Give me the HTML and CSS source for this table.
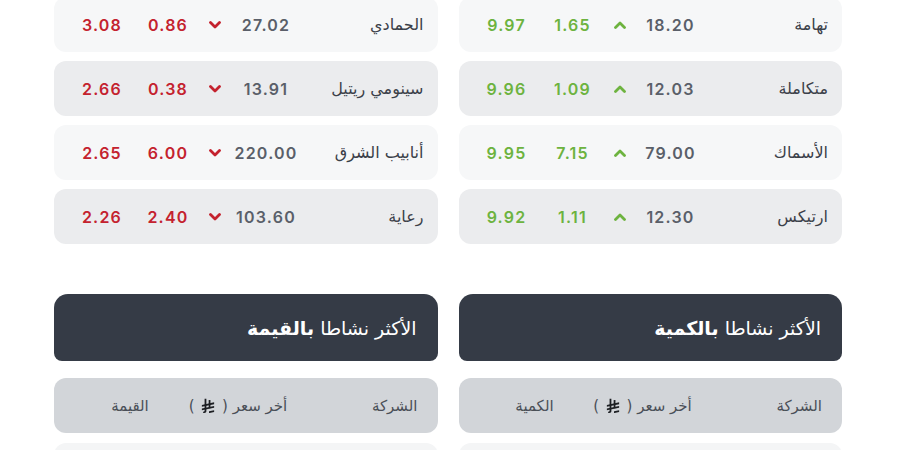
FILE: index.html
```html
<!DOCTYPE html>
<html lang="ar" dir="rtl">
  <head>
    <meta charset="UTF-8" />
    <meta name="viewport" content="width=device-width, initial-scale=1.0" />
    <title>السوق السعودي</title>
    <link rel="stylesheet" href="styles.css">
  </head>
  <body>
    <main class="board">
      <!-- right column: gainers + most active by volume -->
      <section class="col">
        <div class="rows">
          <div class="row">
            <span class="name">تهامة</span>
            <span class="num price">18.20</span>
            <span class="arrow up"><svg viewBox="0 0 12 8"><path d="M1.5 6.5 L6 2 L10.5 6.5" /></svg></span>
            <span class="num up-txt">1.65</span>
            <span class="num up-txt">9.97</span>
          </div>
          <div class="row">
            <span class="name">متكاملة</span>
            <span class="num price">12.03</span>
            <span class="arrow up"><svg viewBox="0 0 12 8"><path d="M1.5 6.5 L6 2 L10.5 6.5" /></svg></span>
            <span class="num up-txt">1.09</span>
            <span class="num up-txt">9.96</span>
          </div>
          <div class="row">
            <span class="name">الأسماك</span>
            <span class="num price">79.00</span>
            <span class="arrow up"><svg viewBox="0 0 12 8"><path d="M1.5 6.5 L6 2 L10.5 6.5" /></svg></span>
            <span class="num up-txt">7.15</span>
            <span class="num up-txt">9.95</span>
          </div>
          <div class="row">
            <span class="name">ارتيكس</span>
            <span class="num price">12.30</span>
            <span class="arrow up"><svg viewBox="0 0 12 8"><path d="M1.5 6.5 L6 2 L10.5 6.5" /></svg></span>
            <span class="num up-txt">1.11</span>
            <span class="num up-txt">9.92</span>
          </div>
        </div>

        <div class="panel-title">الأكثر نشاطا <b>بالكمية</b></div>
        <div class="head-row">
          <span>الشركة</span>
          <span>أخر سعر ( <svg class="riyal" viewBox="0 0 20 22"><path d="M5 1h2.6v18.5c0 1.5-1.2 2.5-3 2.5H2.5l1.3-2.4H5z" /><path d="M11 3h2.6v12H11z" /><path d="M1 10.2 19 6.4v2.6L1 12.8z" /><path d="M1 15.4 19 11.6v2.6L1 18z" /><path d="M11.5 19.6 19 18v2.6l-7.5 1.6z" /></svg> )</span>
          <span>الكمية</span>
        </div>
        <div class="row next"></div>
      </section>

      <!-- left column: losers + most active by value -->
      <section class="col">
        <div class="rows">
          <div class="row">
            <span class="name">الحمادي</span>
            <span class="num price">27.02</span>
            <span class="arrow down"><svg viewBox="0 0 12 8"><path d="M1.5 1.5 L6 6 L10.5 1.5" /></svg></span>
            <span class="num down-txt">0.86</span>
            <span class="num down-txt">3.08</span>
          </div>
          <div class="row">
            <span class="name">سينومي ريتيل</span>
            <span class="num price">13.91</span>
            <span class="arrow down"><svg viewBox="0 0 12 8"><path d="M1.5 1.5 L6 6 L10.5 1.5" /></svg></span>
            <span class="num down-txt">0.38</span>
            <span class="num down-txt">2.66</span>
          </div>
          <div class="row">
            <span class="name">أنابيب الشرق</span>
            <span class="num price">220.00</span>
            <span class="arrow down"><svg viewBox="0 0 12 8"><path d="M1.5 1.5 L6 6 L10.5 1.5" /></svg></span>
            <span class="num down-txt">6.00</span>
            <span class="num down-txt">2.65</span>
          </div>
          <div class="row">
            <span class="name">رعاية</span>
            <span class="num price">103.60</span>
            <span class="arrow down"><svg viewBox="0 0 12 8"><path d="M1.5 1.5 L6 6 L10.5 1.5" /></svg></span>
            <span class="num down-txt">2.40</span>
            <span class="num down-txt">2.26</span>
          </div>
        </div>

        <div class="panel-title">الأكثر نشاطا <b>بالقيمة</b></div>
        <div class="head-row">
          <span>الشركة</span>
          <span>أخر سعر ( <svg class="riyal" viewBox="0 0 20 22"><path d="M5 1h2.6v18.5c0 1.5-1.2 2.5-3 2.5H2.5l1.3-2.4H5z" /><path d="M11 3h2.6v12H11z" /><path d="M1 10.2 19 6.4v2.6L1 12.8z" /><path d="M1 15.4 19 11.6v2.6L1 18z" /><path d="M11.5 19.6 19 18v2.6l-7.5 1.6z" /></svg> )</span>
          <span>القيمة</span>
        </div>
        <div class="row next"></div>
      </section>
    </main>
  </body>
</html>
```

FILE: styles.css
```css
body {
  margin: 0;
  background-color: #fff;
  font-family: "DejaVu Sans", sans-serif;
  color: #3b4049;
  overflow: hidden;
}
.board {
  display: flex;
  gap: 21px;
  padding: 0 58px 0 54px;
  margin-top: -3px;
}
.col {
  width: 384px;
  display: flex;
  flex-direction: column;
}
.rows {
  display: flex;
  flex-direction: column;
  gap: 9px;
}
.row {
  height: 55px;
  border-radius: 12px;
  background-color: #f6f7f8;
  display: grid;
  grid-template-columns: 1fr 84px 18px 76px 56px;
  align-items: center;
  padding: 0 14px 0 20px;
}
.rows .row:nth-child(even) {
  background-color: #ebecee;
}
.name {
  font-size: 16px;
  color: #3b4049;
}
.num {
  font-family: Inter, sans-serif;
  font-weight: 600;
  font-size: 16px;
  letter-spacing: 1.2px;
  text-align: center;
}
.price {
  color: #5a5f69;
}
.up-txt {
  color: #6db33f;
}
.down-txt {
  color: #c4222e;
}
.arrow {
  display: flex;
  justify-content: center;
}
.arrow svg {
  width: 12px;
  height: 8px;
  fill: none;
  stroke-width: 2.8;
  stroke-linecap: round;
  stroke-linejoin: round;
}
.arrow.up svg {
  stroke: #6db33f;
}
.arrow.down svg {
  stroke: #c4222e;
}
.panel-title {
  margin-top: 50px;
  height: 67px;
  border-radius: 14px 14px 8px 8px;
  background-color: #353b46;
  color: #fff;
  font-size: 19px;
  display: flex;
  align-items: center;
  padding: 0 21px;
}
.panel-title b {
  margin-right: 6px;
}
.head-row {
  margin-top: 17px;
  height: 55px;
  border-radius: 12px;
  background-color: #d2d5d9;
  display: grid;
  grid-template-columns: 1fr 120px 80px;
  column-gap: 8px;
  align-items: center;
  padding: 0 20px 0 36px;
  font-size: 15px;
  color: #4a4f57;
}
.head-row span:not(:first-child) {
  text-align: center;
}
.riyal {
  width: 14px;
  height: 15px;
  fill: #1d1f23;
  vertical-align: -2px;
  margin: 0 2px;
}
.row.next {
  margin-top: 10px;
  background-color: #f4f5f6;
}
```
